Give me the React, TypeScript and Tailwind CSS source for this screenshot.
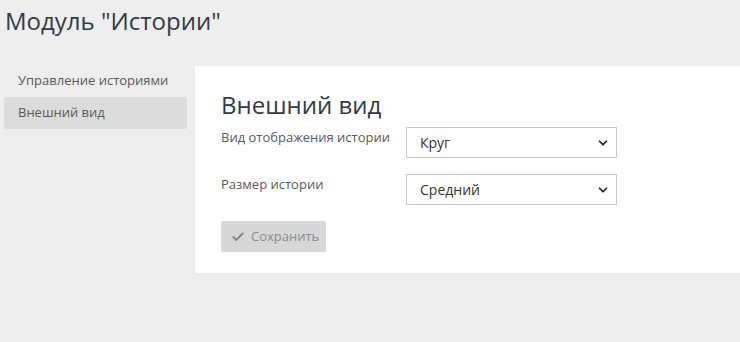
import { Check, ChevronDown } from "lucide-react";

const font = { fontFamily: '"Open Sans", "Liberation Sans", sans-serif' };

function SelectField({ label, value }: { label: string; value: string }) {
  return (
    <div className="flex items-start">
      <div className="w-[185px] pt-[1px] text-[13px] leading-[18px] text-[#5a5a5a]">{label}</div>
      <div className="flex h-[31px] w-[211px] items-center justify-between border border-[#c8c8c8] bg-white pl-[13px] pr-[6px] text-[14px] text-[#333]">
        <span>{value}</span>
        <ChevronDown size={14} strokeWidth={3} className="text-[#222]" />
      </div>
    </div>
  );
}

export default function App() {
  return (
    <div className="h-[342px] w-[740px] overflow-hidden bg-[#eeeeee]" style={font}>
      <h1 className="pl-[5px] pt-[3px] text-[24px] leading-[36px] text-[#333b47]">Модуль "Истории"</h1>
      <div className="mt-[27px] flex items-start">
        <nav className="flex w-[195px] flex-col pl-[4px] pr-[8px] text-[13px] text-[#5a5a5a]">
          <div className="flex h-[30px] items-center px-[14px]">Управление историями</div>
          <div className="mt-[1px] flex h-[32px] items-center rounded-[3px] bg-[#dcdcdd] px-[14px]">Внешний вид</div>
        </nav>
        <div className="h-[207px] flex-1 bg-white pl-[26px] pt-[22px]">
          <h2 className="text-[24px] leading-[34px] text-[#333b47]">Внешний вид</h2>
          <div className="mt-[5px] flex flex-col gap-[16px]">
            <SelectField label="Вид отображения истории" value="Круг" />
            <SelectField label="Размер истории" value="Средний" />
          </div>
          <button className="mt-[16px] flex h-[31px] w-[105px] items-center gap-[6px] rounded-[2px] bg-[#d7d7d7] pl-[10px] text-[13px] text-[#8a8a8a]">
            <Check size={14} strokeWidth={3.5} className="text-[#8a8a8a]" />
            Сохранить
          </button>
        </div>
      </div>
    </div>
  );
}
